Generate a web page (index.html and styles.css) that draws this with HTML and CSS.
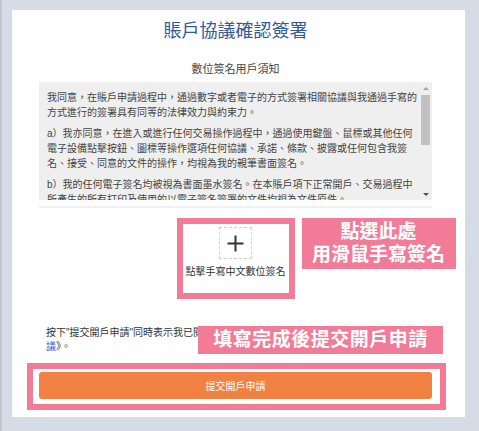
FILE: index.html
```html
<!DOCTYPE html>
<html lang="zh-Hant">
<head>
  <meta charset="UTF-8" />
  <meta name="viewport" content="width=device-width, initial-scale=1.0"/>
  <title>賬戶協議確認簽署</title>
  <link rel="stylesheet" href="styles.css">
</head>
<body>
  <div class="card">
    <h1 class="title">賬戶協議確認簽署</h1>
    <h2 class="subtitle">數位簽名用戶須知</h2>

    <div class="terms-wrap">
      <div class="terms">
        <div class="terms-text">
          <p>我同意，在賬戶申請過程中，通過數字或者電子的方式簽署相關協議與我通過手寫的方式進行的簽署具有同等的法律效力與約束力。</p>
          <p>a）我亦同意，在進入或進行任何交易操作過程中，通過使用鍵盤、鼠標或其他任何電子設備點擊按鈕、圖標等操作選項任何協議、承諾、條款、披露或任何包含我簽名、接受、同意的文件的操作，均視為我的親筆書面簽名。</p>
          <p>b）我的任何電子簽名均被視為書面墨水簽名。在本賬戶項下正常開戶、交易過程中所產生的所有打印及使用的以電子簽名簽署的文件均視為文件原件。</p>
          <p>c）我同意以電子方式接收與本賬戶有關的所有文件、通知、結單及其他通訊，並確認該等電子文件與書面文件具有同等效力。</p>
        </div>
        <div class="scrollbar">
          <div class="scroll-btn"><span class="arrow-up"></span></div>
          <div class="scroll-track"><div class="scroll-thumb"></div></div>
          <div class="scroll-btn"><span class="arrow-down"></span></div>
        </div>
      </div>
    </div>

    <div class="sign-row">
      <div class="sign-frame">
        <div class="sign-box">
          <div class="sign-plus">
            <svg width="17" height="17" viewBox="0 0 17 17">
              <path d="M8.5 0.5v16M0.5 8.5h16" stroke="#333" stroke-width="2" fill="none"/>
            </svg>
          </div>
          <div class="sign-label">點擊手寫中文數位簽名</div>
        </div>
        <div class="tip tip-sign">點選此處<br>用滑鼠手寫簽名</div>
      </div>
    </div>

    <p class="note">按下"提交開戶申請"同時表示我已閱讀並同意《<a href="#">客戶協議、風險披露聲明及電子交易協議</a>》。
      <span class="tip tip-submit">填寫完成後提交開戶申請</span>
    </p>

    <div class="submit-frame">
      <button class="submit-btn">提交開戶申請</button>
    </div>
  </div>
</body>
</html>
```

FILE: styles.css
```css
* {
  margin: 0;
  padding: 0;
  box-sizing: border-box;
}

html, body {
  height: 100%;
}

body {
  background: #d6dce5;
  border-left: 2px solid #c3c7cf;
  font-family: "Liberation Sans", "Noto Sans CJK TC", sans-serif;
  color: #333;
  overflow: hidden;
}

.card {
  background: #fff;
  margin: 10px 14px 0 10px;
  height: 407px;
  padding: 9px 33px 0 27px;
}

.title {
  font-size: 18px;
  line-height: 24px;
  font-weight: normal;
  color: #2f5b9c;
  text-align: center;
}

.subtitle {
  margin-top: 18px;
  font-size: 11px;
  line-height: 16px;
  font-weight: normal;
  color: #444;
  text-align: center;
}

.terms-wrap {
  margin-top: 5px;
  padding-bottom: 6px;
  border-bottom: 2px solid #f0f0f0;
}

.terms {
  display: flex;
  height: 118px;
  background: #efefef;
}

.terms-text {
  flex: 1;
  overflow: hidden;
  padding: 8px 0 0 8px;
  font-size: 10px;
  line-height: 15px;
  color: #444;
}

.terms-text p {
  width: 371px;
  margin-bottom: 6px;
}

/* fake scrollbar, headless shots hide the real one */
.scrollbar {
  width: 12px;
  display: flex;
  flex-direction: column;
}

.scroll-btn {
  height: 12px;
  display: flex;
  justify-content: center;
  align-items: center;
}

.arrow-up,
.arrow-down {
  width: 0;
  height: 0;
  border-left: 3px solid transparent;
  border-right: 3px solid transparent;
}

.arrow-up {
  border-bottom: 3px solid #a3a3a3;
}

.arrow-down {
  border-top: 3px solid #505050;
}

.scroll-track {
  flex: 1;
  padding: 1px 2px 0 1px;
}

.scroll-thumb {
  height: 50px;
  background: #c1c1c1;
}

.sign-row {
  display: flex;
  justify-content: center;
  margin-top: 10px;
}

.sign-frame {
  position: relative;
  width: 118px;
  height: 81px;
  border: 6px solid #f27c97;
}

.sign-box {
  display: flex;
  flex-direction: column;
  align-items: center;
  padding-top: 3px;
}

.sign-plus {
  width: 33px;
  height: 32px;
  border: 1px dashed #d0d0d0;
  display: flex;
  justify-content: center;
  align-items: center;
}

.sign-label {
  margin-top: 6px;
  font-size: 10px;
  line-height: 14px;
  color: #333;
  white-space: nowrap;
}

.tip {
  position: absolute;
  background: #f27c97;
  color: #fff;
  font-weight: bold;
  font-size: 19px;
  text-align: center;
}

.tip-sign {
  top: -6px;
  left: 119px;
  width: 154px;
  height: 51px;
  line-height: 23px;
  padding-top: 2px;
}

.note {
  position: relative;
  margin-top: 27px;
  padding-left: 7px;
  font-size: 10px;
  line-height: 14px;
  color: #333;
}

.note a {
  color: #2a6ed0;
  text-decoration: none;
}

.tip-submit {
  top: 0;
  left: 159px;
  width: 245px;
  height: 28px;
  line-height: 28px;
  letter-spacing: 0.5px;
}

.submit-frame {
  margin: 9px -14px 0 -12px;
  border: 6px solid #f27c97;
  padding: 3px 8px 5px 6px;
}

.submit-btn {
  display: block;
  width: 100%;
  height: 27px;
  border: none;
  border-radius: 3px;
  background: #f08142;
  color: #fff;
  font-family: "Liberation Sans", "Noto Sans CJK TC", sans-serif;
  font-size: 10px;
  cursor: pointer;
}
```
